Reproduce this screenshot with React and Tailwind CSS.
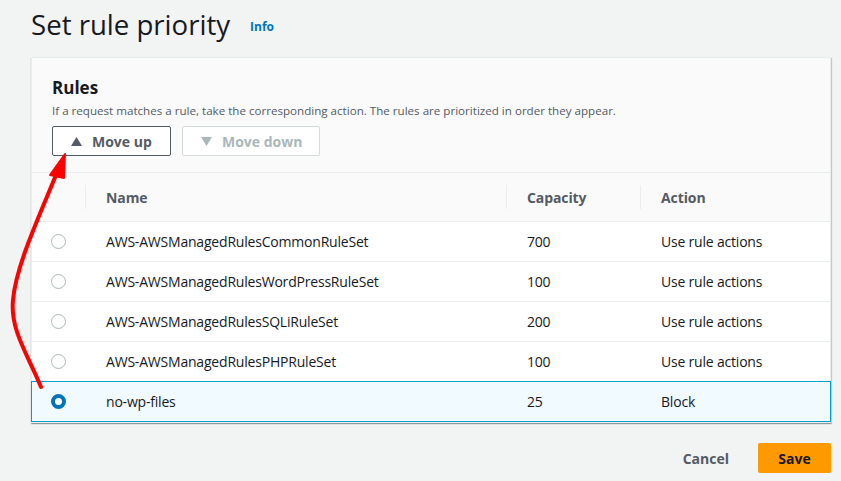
import React from 'react';

const rules = [
    { name: 'AWS-AWSManagedRulesCommonRuleSet', capacity: 700, action: 'Use rule actions' },
    { name: 'AWS-AWSManagedRulesWordPressRuleSet', capacity: 100, action: 'Use rule actions' },
    { name: 'AWS-AWSManagedRulesSQLiRuleSet', capacity: 200, action: 'Use rule actions' },
    { name: 'AWS-AWSManagedRulesPHPRuleSet', capacity: 100, action: 'Use rule actions' },
    { name: 'no-wp-files', capacity: 25, action: 'Block', selected: true },
];

function Radio({ checked }) {
    if (checked) {
        return <span className="block w-[15px] h-[15px] rounded-full border-[4px] border-[#0073bb] bg-white" />;
    }
    return <span className="block w-[15px] h-[15px] rounded-full border-[1.5px] border-[#aab7b8] bg-white" />;
}

export default function App() {
    return (
        <div className="relative w-[841px] h-[481px] bg-[#f2f3f3] overflow-hidden text-[#16191f]" style={{ fontFamily: '"Open Sans", sans-serif' }}>
            {/* Titre */}
            <div className="flex items-end gap-5 pl-[31px] pt-[2px] h-[44px]">
                <h1 className="text-[27.6px] leading-[40px] font-normal">Set rule priority</h1>
                <a className="text-[12px] font-bold text-[#0073bb] mb-[8px]">Info</a>
            </div>

            {/* Carte */}
            <div className="mt-[13px] ml-[31px] w-[800px] bg-white border border-[#eaeded] shadow-[0_1px_1px_0_rgba(0,28,36,0.3),1px_1px_1px_0_rgba(0,28,36,0.15)]">
                <div className="bg-[#fafafa] px-5 pt-[19px] pb-[16px] border-b border-[#eaeded]">
                    <h2 className="text-[17px] leading-[22px] font-bold">Rules</h2>
                    <p className="text-[11.6px] leading-[20px] mt-[2px] text-[#545b64]">
                        If a request matches a rule, take the corresponding action. The rules are prioritized in order they appear.
                    </p>
                    <div className="flex gap-[11px] mt-[5px]">
                        <button className="flex items-center gap-[10px] h-[30px] w-[119px] pl-[18px] border border-[#545b64] rounded-[2px] bg-white text-[#545b64] text-[14px] font-bold">
                            <svg width="11" height="9" viewBox="0 0 11 9"><path d="M5.5 0 L11 9 L0 9 Z" fill="#545b64" /></svg>
                            Move up
                        </button>
                        <button className="flex items-center gap-[10px] h-[30px] w-[138px] pl-[18px] border border-[#d5dbdb] rounded-[2px] bg-white text-[#aab7b8] text-[14px] font-bold">
                            <svg width="11" height="9" viewBox="0 0 11 9"><path d="M0 0 L11 0 L5.5 9 Z" fill="#aab7b8" /></svg>
                            Move down
                        </button>
                    </div>
                </div>

                <div className="grid grid-cols-[54px_421px_134px_1fr] h-[49px] bg-[#fafafa] border-b border-[#eaeded] text-[14px] font-bold text-[#545b64] tracking-[-0.1px]">
                    <div className="flex items-center"><span className="ml-auto h-[24px] border-r border-[#eaeded]" /></div>
                    <div className="flex items-center pl-5">Name<span className="ml-auto h-[24px] border-r border-[#eaeded]" /></div>
                    <div className="flex items-center pl-5">Capacity<span className="ml-auto h-[24px] border-r border-[#eaeded]" /></div>
                    <div className="flex items-center pl-5">Action</div>
                </div>

                {rules.map((r) => (
                    <div
                        key={r.name}
                        className={
                            r.selected
                                ? 'grid grid-cols-[54px_421px_134px_1fr] h-[41px] -mt-px bg-[#f1faff] border border-[#00a1c9] -mx-px text-[14px] tracking-[-0.2px]'
                                : 'grid grid-cols-[54px_421px_134px_1fr] h-[40px] border-b border-[#eaeded] text-[14px] tracking-[-0.2px]'
                        }
                    >
                        <div className="flex items-center pl-[19px]"><Radio checked={r.selected} /></div>
                        <div className="flex items-center pl-5">{r.name}</div>
                        <div className="flex items-center pl-5">{r.capacity}</div>
                        <div className="flex items-center pl-5">{r.action}</div>
                    </div>
                ))}
            </div>

            {/* Actions */}
            <div className="flex justify-end items-center gap-[9px] pr-[10px] mt-[20px]">
                <button className="px-5 h-[30px] text-[14px] font-bold text-[#545b64]">Cancel</button>
                <button className="w-[73px] h-[30px] rounded-[2px] bg-[#ff9900] text-[14px] font-bold text-[#16191f]">Save</button>
            </div>

            {/* Flèche rouge */}
            <svg className="absolute left-0 top-0 pointer-events-none" width="841" height="481">
                <path d="M41 387 C 28 355, 10 330, 13 300 C 16 265, 40 215, 58 170" fill="none" stroke="#ff0000" strokeWidth="4" strokeLinecap="round" />
                <path d="M65 154 L50 175 L64 178 Z" fill="#ff0000" stroke="#ff0000" strokeWidth="2" strokeLinejoin="round" />
            </svg>
        </div>
    );
}
